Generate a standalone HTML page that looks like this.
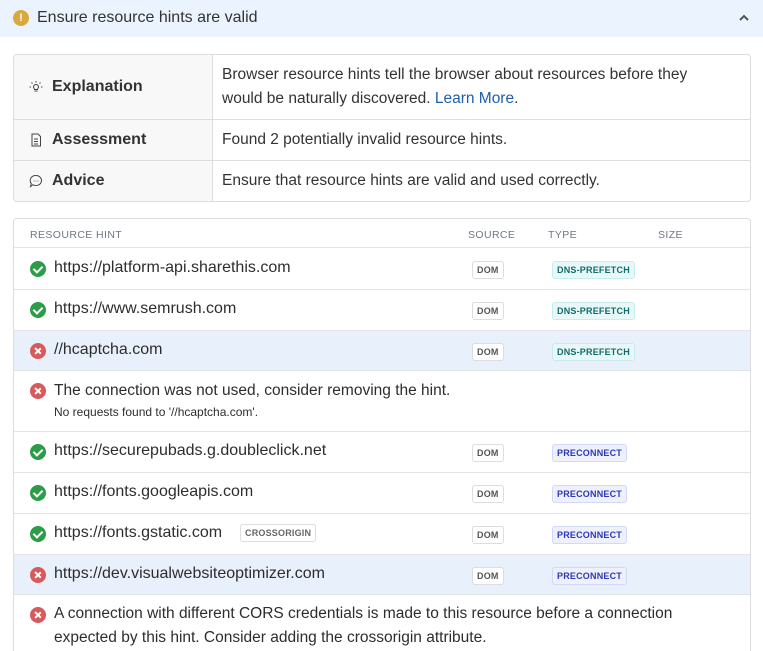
<!DOCTYPE html>
<html><head><meta charset="utf-8"><style>
*{box-sizing:border-box;margin:0;padding:0}
html,body{width:763px;height:651px;overflow:hidden}
body{background:#fff;font-family:"Liberation Sans",Arial,sans-serif;color:#2d2d2d;position:relative}
.hdr{position:absolute;left:0;top:0;width:763px;height:37px;background:#ebf3fe}
.hdr .t{position:absolute;left:37px;top:9px;font-size:16px;color:#333}
.hdr .w{position:absolute;left:13px;top:10px;width:16px;height:16px;border-radius:50%;background:#d9a93c;color:#fff;font-size:11px;font-weight:bold;text-align:center;line-height:16px}
.t1{position:absolute;left:13px;top:54px;width:738px;height:148px;border:1px solid #ddd;border-radius:4px;overflow:hidden}
.t1 .r{position:absolute;left:0;width:736px;border-top:1px solid #ddd}
.t1 .l{position:absolute;left:0;top:0;bottom:0;width:199px;background:#f8f8f8;border-right:1px solid #ddd}
.t1 .l span{position:absolute;left:38px;font-size:16px;font-weight:bold;color:#333}
.t1 .l svg{position:absolute;left:15px}
.t1 .v{position:absolute;left:208px;font-size:15.5px;line-height:24px;color:#333}
a{color:#1f5faa;text-decoration:none}
.t2{position:absolute;left:13px;top:218px;width:738px;height:460px;border:1px solid #ddd;border-radius:4px}
.h{position:absolute;top:10px;font-size:10.5px;letter-spacing:.4px;color:#6e7785}
.row{position:absolute;left:0;width:736px;border-top:1px solid #e3e3e3}
.hl{background:#e8f0fb}
.ic{position:absolute;left:16px;width:16px;height:16px;border-radius:50%}
.ok{background:#2a9d46}
.er{background:#d85a5a}
.u{position:absolute;left:40px;font-size:16px;color:#2d2d2d}
.b{position:absolute;height:18px;border:1px solid #ddd;border-radius:3px;background:#fff;font-size:9px;font-weight:bold;color:#555;line-height:16px;padding:0 4px;letter-spacing:.2px}
.dns{background:#e8f8f8;border-color:#c8ecec;color:#146b6b}
.pre{background:#eef0fd;border-color:#d3d8f5;color:#2c38b6}
.m{position:absolute;left:40px;font-size:15.5px;line-height:24px;color:#2d2d2d}
.s{font-size:12px}
.ok::after{content:"";position:absolute;left:5px;top:3px;width:4px;height:7px;border:solid #fff;border-width:0 2px 2px 0;transform:rotate(45deg)}
.er::before,.er::after{content:"";position:absolute;left:7px;top:4px;width:1.6px;height:8px;background:#fff;transform:rotate(45deg)}.er::after{transform:rotate(-45deg)}
</style></head><body>
<div class="hdr"><div class="w">!</div><div class="t">Ensure resource hints are valid</div>
<svg style="position:absolute;left:738px;top:13px" width="12" height="10" viewBox="0 0 12 10"><path d="M2 7L6 3L10 7" stroke="#555" stroke-width="2" fill="none"/></svg></div>

<div class="t1">
 <div class="r" style="top:-1px;height:66px"><div class="l"><svg style="top:25px" width="14" height="14" viewBox="0 0 14 14" fill="none" stroke="#444" stroke-width="1"><path d="M4.5 7a2.5 2.5 0 1 1 5 0c0 1-1 1.5-1 2.5h-3c0-1-1-1.5-1-2.5zM5.5 11h3M0.5 7h1.5M12 7h1.5M7 1v1.5M2.5 2.5l1 1M11.5 2.5l-1 1"/></svg><span style="top:23px">Explanation</span></div>
 <div class="v" style="top:8px">Browser resource hints tell the browser about resources before they<br>would be naturally discovered. <a>Learn More</a>.</div></div>
 <div class="r" style="top:64px;height:41px"><div class="l"><svg style="top:13px" width="14" height="14" viewBox="0 0 14 14" fill="none" stroke="#444" stroke-width="1"><path d="M3 1h6l2.5 2.5V13H3zM5 6h4M5 8.5h4M5 11h4"/></svg><span style="top:11px">Assessment</span></div>
 <div class="v" style="top:8px">Found 2 potentially invalid resource hints.</div></div>
 <div class="r" style="top:105px;height:42px"><div class="l"><svg style="top:13px" width="14" height="14" viewBox="0 0 14 14" fill="none" stroke="#444" stroke-width="1"><path d="M7 1.5a5.5 5 0 1 1-3 9.2L1.5 12.5l.8-3A5.5 5 0 0 1 7 1.5z"/><path d="M4.8 7h.5M6.8 7h.5M8.8 7h.5" stroke-width="1.2"/></svg><span style="top:11px">Advice</span></div>
 <div class="v" style="top:8px">Ensure that resource hints are valid and used correctly.</div></div>
</div>

<div class="t2">
 <div class="h" style="left:16px">RESOURCE HINT</div>
 <div class="h" style="left:454px">SOURCE</div>
 <div class="h" style="left:534px">TYPE</div>
 <div class="h" style="left:644px">SIZE</div>

 <div class="row" style="top:28px;height:42px"><div class="ic ok" style="top:13px"></div><div class="u" style="top:11px">https://platform-api.sharethis.com</div><div class="b" style="left:458px;top:13px">DOM</div><div class="b dns" style="left:538px;top:13px">DNS-PREFETCH</div></div>
 <div class="row" style="top:70px;height:41px"><div class="ic ok" style="top:12px"></div><div class="u" style="top:10px">https://www.semrush.com</div><div class="b" style="left:458px;top:12px">DOM</div><div class="b dns" style="left:538px;top:12px">DNS-PREFETCH</div></div>
 <div class="row hl" style="top:111px;height:40px"><div class="ic er" style="top:12px"></div><div class="u" style="top:10px">//hcaptcha.com</div><div class="b" style="left:458px;top:12px">DOM</div><div class="b dns" style="left:538px;top:12px">DNS-PREFETCH</div></div>
 <div class="row" style="top:151px;height:61px"><div class="ic er" style="top:12px"></div><div class="m" style="top:8px">The connection was not used, consider removing the hint.<div class="s" style="line-height:18px">No requests found to '//hcaptcha.com'.</div></div></div>
 <div class="row" style="top:212px;height:41px"><div class="ic ok" style="top:12px"></div><div class="u" style="top:10px">https://securepubads.g.doubleclick.net</div><div class="b" style="left:458px;top:12px">DOM</div><div class="b pre" style="left:538px;top:12px">PRECONNECT</div></div>
 <div class="row" style="top:253px;height:41px"><div class="ic ok" style="top:12px"></div><div class="u" style="top:10px">https://fonts.googleapis.com</div><div class="b" style="left:458px;top:12px">DOM</div><div class="b pre" style="left:538px;top:12px">PRECONNECT</div></div>
 <div class="row" style="top:294px;height:41px"><div class="ic ok" style="top:12px"></div><div class="u" style="top:10px">https://fonts.gstatic.com</div><div class="b" style="left:226px;top:10px;color:#666">CROSSORIGIN</div><div class="b" style="left:458px;top:12px">DOM</div><div class="b pre" style="left:538px;top:12px">PRECONNECT</div></div>
 <div class="row hl" style="top:335px;height:40px"><div class="ic er" style="top:12px"></div><div class="u" style="top:10px">https://dev.visualwebsiteoptimizer.com</div><div class="b" style="left:458px;top:12px">DOM</div><div class="b pre" style="left:538px;top:12px">PRECONNECT</div></div>
 <div class="row" style="top:375px;height:80px"><div class="ic er" style="top:12px"></div><div class="m" style="top:7px">A connection with different CORS credentials is made to this resource before a connection<br>expected by this hint. Consider adding the crossorigin attribute.</div></div>
</div>
</body></html>
